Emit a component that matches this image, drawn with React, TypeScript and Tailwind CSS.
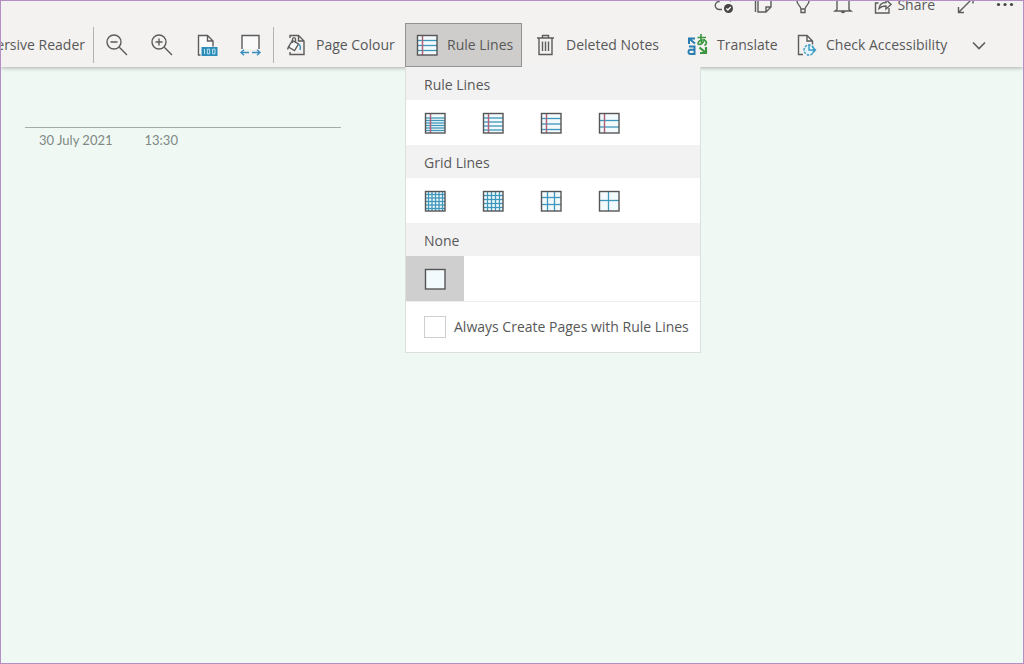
import { ReactNode, useState } from 'react';

type TIconProps = {
  children: ReactNode;
};

const Icon = ({ children }: TIconProps) => (
  <svg
    width="20"
    height="20"
    viewBox="0 0 20 20"
    fill="none"
    stroke="#5c5c5c"
    strokeWidth="1.4"
    className="shrink-0 overflow-visible"
    aria-hidden="true"
  >
    {children}
  </svg>
);

type TLinesProps = {
  rows: number[];
  cols?: number[];
  margin?: boolean;
};

const LinesIcon = ({ rows, cols = [], margin = false }: TLinesProps) => (
  <Icon>
    <rect x="0" y="0" width="20" height="20" fill="#f3fafd" stroke="none" />
    {rows.map((y) => (
      <path key={`r${y}`} d={`M0 ${y}H20`} stroke="#3f97bb" strokeWidth="1.3" />
    ))}
    {cols.map((x) => (
      <path key={`c${x}`} d={`M${x} 0V20`} stroke="#3f97bb" strokeWidth="1.3" />
    ))}
    {margin && <path d="M5.5 0V20" stroke="#b0627a" strokeWidth="1.5" />}
    <rect x="0.5" y="0.5" width="19.500" height="19.500" stroke="#555555" />
  </Icon>
);

const ruleOptions = [
  { id: 'narrow', label: 'Narrow Ruled', rows: [5, 7.5, 10, 12.5, 15, 17.5] },
  { id: 'college', label: 'College Ruled', rows: [5, 9, 13, 17] },
  { id: 'standard', label: 'Standard Ruled', rows: [5.5, 11, 16.5] },
  { id: 'wide', label: 'Wide Ruled', rows: [7.5, 14] },
];

const gridOptions = [
  { id: 'small', label: 'Small Grid', lines: [3.5, 7, 10.5, 14, 17.5] },
  { id: 'medium', label: 'Medium Grid', lines: [4.5, 8.5, 12.5, 16.5] },
  { id: 'large', label: 'Large Grid', lines: [6.5, 13.5] },
  { id: 'very-large', label: 'Very Large Grid', lines: [9.5] },
];

const MenuTitle = ({ children }: { children: ReactNode }) => (
  <h2 className="h-[33px] bg-[#f3f2f2] pl-[18px] text-sm leading-[35px]">
    {children}
  </h2>
);

type TOptionProps = {
  label: string;
  active: boolean;
  onClick: () => void;
  children: ReactNode;
};

const MenuOption = ({ label, active, onClick, children }: TOptionProps) => (
  <button
    type="button"
    aria-label={label}
    aria-pressed={active}
    onClick={onClick}
    className={`flex h-[45px] w-[58px] items-center justify-center ${
      active ? 'bg-[#cfcfcf]' : 'bg-white hover:bg-[#ececec]'
    }`}
  >
    {children}
  </button>
);

const RuleLinesMenu = () => {
  const [selected, setSelected] = useState('none');

  return (
    <div className="absolute top-full left-0 z-20 w-[296px] border border-t-0 border-[#dcdfde] bg-white">
      <MenuTitle>Rule Lines</MenuTitle>
      <div className="flex">
        {ruleOptions.map((item) => (
          <MenuOption
            key={item.id}
            label={item.label}
            active={selected === item.id}
            onClick={() => setSelected(item.id)}
          >
            <LinesIcon rows={item.rows} margin />
          </MenuOption>
        ))}
      </div>
      <MenuTitle>Grid Lines</MenuTitle>
      <div className="flex">
        {gridOptions.map((item) => (
          <MenuOption
            key={item.id}
            label={item.label}
            active={selected === item.id}
            onClick={() => setSelected(item.id)}
          >
            <LinesIcon rows={item.lines} cols={item.lines} />
          </MenuOption>
        ))}
      </div>
      <MenuTitle>None</MenuTitle>
      <div className="flex">
        <MenuOption
          label="None"
          active={selected === 'none'}
          onClick={() => setSelected('none')}
        >
          <LinesIcon rows={[]} />
        </MenuOption>
      </div>
      <label className="flex h-[51px] items-center gap-2 border-t border-[#ededed] pl-[18px] text-sm whitespace-nowrap">
        <input
          type="checkbox"
          className="size-[22px] shrink-0 appearance-none border border-[#cfcfcf] bg-white checked:bg-[#7719aa]"
        />
        Always Create Pages with Rule Lines
      </label>
    </div>
  );
};

const TopBar = () => (
  <div className="flex h-3.5 items-end justify-end gap-5 overflow-hidden pr-2">
    <button type="button" aria-label="Sync status">
      <Icon>
        <path d="M9 14.500H6.500a4 4 0 0 1-.5-8 6 6 0 0 1 11.500 0" />
        <circle cx="15.500" cy="13.500" r="4.500" fill="#444444" stroke="none" />
        <path d="m13.300 13.500 1.600 1.600 2.800-3" stroke="#ffffff" />
      </Icon>
    </button>
    <button type="button" aria-label="Feed">
      <Icon>
        <path d="M5 2v15h8l5-5V2zM13 17v-5h5M2.500 3v14" />
      </Icon>
    </button>
    <button type="button" aria-label="Tell me">
      <Icon>
        <path d="M8 14c0-3-4-4-4-8a6 6 0 0 1 12 0c0 4-4 5-4 8zM8 14v3.500h4V14" />
      </Icon>
    </button>
    <button type="button" aria-label="Notifications">
      <Icon>
        <path d="M4 14.500V7a6 6 0 0 1 12 0v7.500l2 1.500H2zM8.500 16.500a1.600 1.600 0 0 0 3 0" />
      </Icon>
    </button>
    <button
      type="button"
      className="flex h-5 items-center gap-1 text-sm leading-5"
    >
      <Icon>
        <path d="M5.500 8H2.500v10h13.500v-5" />
        <path d="M6 13.500c.5-4 3-6 7-6V4.500l5 5-5 4.500v-3c-3 0-5 .5-7 2.500z" />
      </Icon>
      Share
    </button>
    <button type="button" aria-label="Full page view">
      <Icon>
        <path d="M3.500 17.500 18 3M3.500 12v5.500H9M12.500 3H18v5.500" />
      </Icon>
    </button>
    <button type="button" aria-label="More options">
      <Icon>
        <g fill="#444444" stroke="none">
          <circle cx="3.500" cy="9.500" r="1.600" />
          <circle cx="10" cy="9.500" r="1.600" />
          <circle cx="16.500" cy="9.500" r="1.600" />
        </g>
      </Icon>
    </button>
  </div>
);

const Separator = () => <div className="h-9 w-px shrink-0 bg-[#b5b3b2]" />;

const Toolbar = () => {
  const [menuOpen, setMenuOpen] = useState(true);

  return (
    <div className="mt-2 flex h-11 items-center text-sm whitespace-nowrap">
      <button
        type="button"
        className="mr-2 flex w-21 shrink-0 justify-end overflow-hidden"
      >
        Immersive Reader
      </button>
      <Separator />
      <button
        type="button"
        aria-label="Zoom out"
        className="flex w-[45px] shrink-0 justify-center"
      >
        <Icon>
          <circle cx="7" cy="7" r="7" />
          <path d="M12.300 12.300 20 20M3.500 7h7" />
        </Icon>
      </button>
      <button
        type="button"
        aria-label="Zoom in"
        className="flex w-[45px] shrink-0 justify-center"
      >
        <Icon>
          <circle cx="7" cy="7" r="7" />
          <path d="M12.300 12.300 20 20M3.500 7h7M7 3.500v7" />
        </Icon>
      </button>
      <button
        type="button"
        aria-label="Zoom to 100%"
        className="flex w-[45px] shrink-0 justify-center"
      >
        <Icon>
          <path d="M4 20H1.500V.5h9l5.500 5.500v6" fill="#fafafa" stroke="none" />
          <path d="M3.500 20H1.500V.5h9l5.500 5.500v5.500M10.500.5V6H16" />
          <rect x="4.500" y="12" width="16" height="9" fill="#2b8db8" stroke="none" />
          <path
            d="M7.500 14v5M10.300 14.200h2.400v4.600h-2.400zM15.600 14.200h2.400v4.600h-2.400z"
            stroke="#bfe3f2"
            strokeWidth="1"
          />
        </Icon>
      </button>
      <button
        type="button"
        aria-label="Page width"
        className="flex w-11 shrink-0 justify-center"
      >
        <Icon>
          <path d="M1 14V.5h17V14" fill="#fafafa" />
          <path
            d="M8 17.500H0M3 14.800 0 17.500l3 2.700M11 17.500h8M16 14.800l3 2.700-3 2.700"
            stroke="#3a8fbf"
          />
        </Icon>
      </button>
      <Separator />
      <button
        type="button"
        className="flex w-[131px] shrink-0 items-center gap-2.5 pl-3"
      >
        <Icon>
          <path d="M4 3V.5h8.500L18 6v13.500H4V17M12.500.5V6H18" />
          <path d="M6.500 5.500 12.500 9 8.500 15.500 2.500 12z" fill="#f8f8f8" />
          <path d="M6.500 8V4.500c0-2.500 3-2.500 3 0V8M3 11l-1.500 3.500" />
          <path d="M12.500 9c2 1.500 2.200 4 1.500 6" stroke="#3a8fbf" />
        </Icon>
        Page Colour
      </button>
      <div className="relative shrink-0">
        <button
          type="button"
          aria-expanded={menuOpen}
          onClick={() => setMenuOpen(!menuOpen)}
          className="flex h-11 w-[117px] items-center gap-2.5 border border-[#959392] bg-[#cfcdcc] pl-[11px]"
        >
          <LinesIcon rows={[5.5, 10.5, 15.5]} margin />
          Rule Lines
        </button>
        {menuOpen && <RuleLinesMenu />}
      </div>
      <button
        type="button"
        className="flex w-[151px] shrink-0 items-center gap-2.5 pl-3.5"
      >
        <Icon>
          <path d="M1 3h17M6.500 3V.5h6V3M3 3V19.500h13V3M6.500 6.500v9.500M9.500 6.500v9.500M12.500 6.500v9.500" />
        </Icon>
        Deleted Notes
      </button>
      <button
        type="button"
        className="flex w-[109px] shrink-0 items-center gap-2.5 pl-3.5"
      >
        <Icon>
          <g stroke="#2a7db0" strokeWidth="2">
            <path d="M2 11.500h5.500V19H3a2.200 2.200 0 0 1 0-4.200h4.500" />
            <path d="M2 9V3.500h6M2.500 4 8 8.500" />
          </g>
          <g stroke="#3c963f">
            <path
              d="M10.500 2.500H19M14-1c-.5 4 0 7 .8 10M17.500 4c-1 3.500-3.500 5.500-5.500 5.500s-1-4.500 3.500-4.500 5 3.500 2 5.500"
              strokeWidth="1.600"
            />
            <path d="M19 12v6h-6M12.500 12.500l6 5" strokeWidth="2.200" />
          </g>
        </Icon>
        Translate
      </button>
      <button
        type="button"
        className="flex w-[174px] shrink-0 items-center gap-2.5 pl-3.5"
      >
        <Icon>
          <path d="M7 19.500H2.500V.5h8.500l5.500 5.500v3.500M11 .5V6h5.500" />
          <circle
            cx="13"
            cy="15"
            r="5"
            fill="#e3f3fa"
            stroke="#3a9ac4"
            strokeDasharray="2.500 1.200"
          />
          <path d="M13 9.500V15h6.500M16.500 12l3 3-3 3" stroke="#3a9ac4" />
        </Icon>
        Check Accessibility
      </button>
      <button
        type="button"
        aria-label="More commands"
        className="flex w-[45px] shrink-0 justify-center"
      >
        <Icon>
          <path d="m4 7.500 6 6 6-6" strokeWidth="1.600" />
        </Icon>
      </button>
    </div>
  );
};

const App = () => {
  return (
    <div className="min-h-screen overflow-hidden border border-[#b48fc6] bg-[#eff8f3] font-['Open_Sans','Noto_Sans',sans-serif] text-[#585858]">
      <header className="relative z-10 bg-[#f3f2f1] shadow-[0_1px_4px_rgba(0,0,0,0.3)]">
        <TopBar />
        <Toolbar />
      </header>
      <main className="ml-6 w-[316px] pt-6">
        <input
          type="text"
          aria-label="Page title"
          className="block h-[37px] w-full border-b border-[#a3ada8] bg-transparent text-xl outline-none"
        />
        <div className="flex gap-8 pt-0.5 pl-3.5 font-['Lato',sans-serif] text-[13px] leading-5 text-[#7f8884]">
          <span>30 July 2021</span>
          <span>13:30</span>
        </div>
      </main>
    </div>
  );
};

export default App;
